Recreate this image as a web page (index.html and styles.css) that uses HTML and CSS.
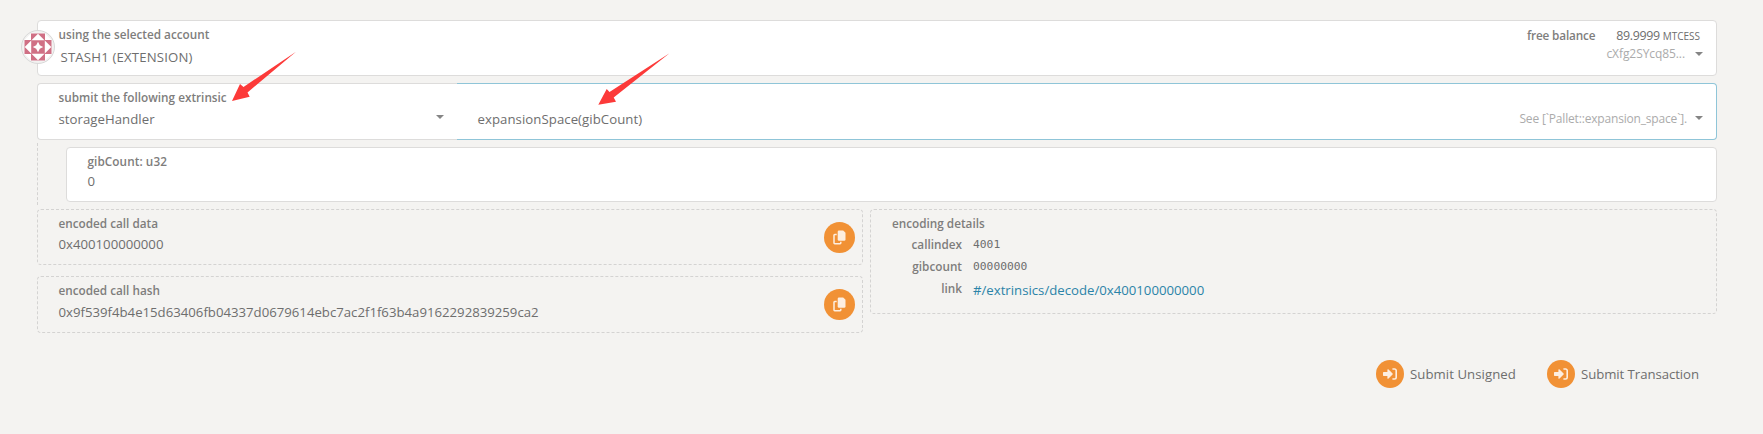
FILE: index.html
```html
<!DOCTYPE html>
<html lang="en">
<head>
<meta charset="utf-8">
<title>Extrinsics</title>
<link rel="stylesheet" href="styles.css">
</head>
<body>
<svg class="defs" width="0" height="0">
  <symbol id="copy" viewBox="0 0 13 15">
    <path d="M6 .5h4.200L12.500 2.800V9.500a1.300 1.300 0 0 1-1.300 1.300H6A1.300 1.300 0 0 1 4.700 9.500V1.800A1.300 1.300 0 0 1 6 .5z" fill="#fdeee0"/>
    <path d="M3.700 4.600H1.700a.7.7 0 0 0-.7.700v7.700c0 .4.300.7.700.7h5.400c.4 0 .7-.3.7-.7v-1.200" fill="none" stroke="#fdeee0" stroke-width="1.500"/>
  </symbol>
  <symbol id="signin" viewBox="0 0 14 12">
    <path d="M.6 4.100h3.800V1.700c0-.5.5-.7.9-.4l4.300 4.300c.2.2.2.6 0 .8l-4.300 4.300c-.4.3-.9.1-.9-.4V7.900H.6a.6.6 0 0 1-.6-.6V4.700c0-.3.3-.6.600-.6z" fill="#fdeee0"/>
    <path d="M9.400 1h2.200A1.600 1.600 0 0 1 13.200 2.600v6.800a1.600 1.600 0 0 1-1.600 1.600H9.400" fill="none" stroke="#fdeee0" stroke-width="1.600"/>
  </symbol>
</svg>
<main class="page">
  <section class="card account">
    <svg class="identicon" viewBox="0 0 34 34">
      <circle cx="17" cy="17" r="16.500" fill="#f3f2f1" stroke="#d8d8d8"/>
      <path d="M10 3.500L3.500 10v14l6.500 6.500h14l6.500-6.500V10L24 3.500z" fill="#fff"/>
      <path d="M10 3.500h14v27H10zM3.500 10h27v14h-27z" fill="#d07085"/>
      <path d="M17 3.700l6.500 6.500h-13zM17 30.300l6.500-6.500h-13zM3.700 17l6.500-6.500v13zM30.300 17l-6.500-6.500v13z" fill="#fff"/>
      <path d="M17 11.800l1.800 3.400 3.400 1.800-3.400 1.800-1.800 3.400-1.800-3.400-3.400-1.800 3.400-1.800z" fill="#fff"/>
    </svg>
    <div class="field">
      <div class="label">using the selected account</div>
      <div class="value v-stash">STASH1 (EXTENSION)</div>
    </div>
    <div class="balance">
      <div class="balance-row"><span class="label">free balance</span><span class="amount">89.9999</span><span class="unit">MTCESS</span></div>
      <div class="hint-row"><span class="hint h-addr">cXfg2SYcq85...</span><i class="caret"></i></div>
    </div>
  </section>

  <section class="extrinsic">
    <div class="module">
      <div>
        <div class="label">submit the following extrinsic</div>
        <div class="value v-module">storageHandler</div>
      </div>
      <i class="caret"></i>
    </div>
    <div class="method">
      <span class="value v-method">expansionSpace(gibCount)</span>
      <span class="hint h-see">See [`Pallet::expansion_space`].</span>
      <i class="caret"></i>
    </div>
  </section>

  <section class="params">
    <div class="card param">
      <div class="label l-gib">gibCount: u32</div>
      <div class="value">0</div>
    </div>
  </section>

  <section class="outputs">
    <div class="left">
      <div class="dashed data">
        <div><div class="label">encoded call data</div><div class="value v-data">0x400100000000</div></div>
        <button class="copy"><svg width="13" height="15"><use href="#copy"/></svg></button>
      </div>
      <div class="dashed hash">
        <div><div class="label">encoded call hash</div><div class="value v-hash">0x9f539f4b4e15d63406fb04337d0679614ebc7ac2f1f63b4a9162292839259ca2</div></div>
        <button class="copy"><svg width="13" height="15"><use href="#copy"/></svg></button>
      </div>
    </div>
    <div class="dashed details">
      <div class="label">encoding details</div>
      <div class="row"><span class="label key">callindex</span><code>4001</code></div>
      <div class="row"><span class="label key">gibcount</span><code>00000000</code></div>
      <div class="row"><span class="label key">link</span><a class="value v-link">#/extrinsics/decode/0x400100000000</a></div>
    </div>
  </section>

  <footer class="actions">
    <div class="action"><span class="round"><svg width="14" height="12"><use href="#signin"/></svg></span><span class="value v-unsigned">Submit Unsigned</span></div>
    <div class="action"><span class="round"><svg width="14" height="12"><use href="#signin"/></svg></span><span class="value v-trans">Submit Transaction</span></div>
  </footer>
</main>
<svg class="arrow arrow-a" width="66" height="51"><path d="M65 .8L16.500 41.500l2.200 4.200L1 50 9 33l3.500 3z" fill="#fc3a39"/></svg>
<svg class="arrow arrow-b" width="72" height="53"><path d="M71.500.2L15.700 44.500l2.300 4.200L.3 51.700 8.700 36l2.800 3z" fill="#fc3a39"/></svg>
</body>
</html>
```
FILE: styles.css
```css
* { box-sizing: border-box; }
body { margin: 0; background: #f4f3f1; color: #6e6e6e; font-family: "Open Sans", "Noto Sans", sans-serif; font-size: 13.2px; line-height: 20px; height: 434px; overflow: hidden; }
.defs { position: absolute; }
.page { width: 1680px; margin-left: 37px; padding-top: 20px; display: flex; flex-direction: column; }
.card { background: #fff; border: 1px solid #dddcdb; border-radius: 4px; }
.label { font-size: 11.75px; font-weight: 600; line-height: 16px; padding-bottom: 2px; color: #7e7d7c; white-space: nowrap; }
.value { white-space: nowrap; }
.hint { color: #ababab; font-size: 12px; white-space: nowrap; }
.caret { width: 0; height: 0; border: 4px solid transparent; border-top-color: #858585; border-bottom: 0; flex: none; }

.account { position: relative; height: 56px; padding: 5px 16px 0 20.5px; display: flex; justify-content: space-between; }
.identicon { position: absolute; left: -17px; top: 9px; width: 34px; height: 34px; }
.v-stash { padding: 3px 0 0 2px; letter-spacing: .17px; }
.balance { display: flex; flex-direction: column; }
.balance-row { display: flex; justify-content: flex-end; align-items: baseline; height: 19px; padding-top: 1px; }
.amount { margin-left: 21px; font-weight: 500; font-size: 12.400px; line-height: 18px; letter-spacing: -.35px; }
.unit { font-size: 10px; margin-left: 3px; font-weight: 500; line-height: 18px; }
.balance-row .label { letter-spacing: -.15px; }
.hint-row { display: flex; justify-content: flex-end; align-items: center; gap: 10px; height: 18px; margin-right: -3px; }
.h-addr { letter-spacing: -.08px; }

.extrinsic { display: flex; height: 57px; margin-top: 7px; }
.module { width: 420px; background: #fff; border: 1px solid #dddcdb; border-right: 0; border-radius: 4px 0 0 4px; padding: 5px 13px 0 20.5px; display: flex; justify-content: space-between; }
.module .caret { margin-top: 26px; }
.v-module { padding-top: 2px; letter-spacing: .04px; }
.method { flex: 1; background: #fff; border: 1px solid #8fc5d8; border-left: 0; border-radius: 0 4px 4px 0; padding: 15px 13px 0 20.5px; display: flex; align-items: center; }
.v-method { letter-spacing: .06px; }
.h-see { margin-left: auto; margin-right: 8px; letter-spacing: -.18px; }
.method .caret { margin-top: -2px; }

.params { height: 62px; margin-top: 3px; padding: 4px 0 0 28px; border-left: 1px dashed #d4d3d2; }
.param { height: 55px; padding: 5px 20px 0 20.500px; }
.l-gib { letter-spacing: .08px; }
.outputs { display: flex; gap: 7px; margin-top: 4px; align-items: flex-start; }
.left { width: 826px; display: flex; flex-direction: column; gap: 11px; }
.dashed { border: 1px dashed #d4d3d2; border-radius: 4px; }
.data, .hash { display: flex; justify-content: space-between; padding: 5px 7px 0 20.5px; }
.data { height: 56px; }
.hash { height: 57px; }
.data .value { padding-top: 1px; }
.hash .value { padding-top: 2px; }
.copy { width: 31px; height: 31px; border: 0; border-radius: 50%; background: #f19135; margin-top: 7px; padding: 0; display: grid; place-items: center; }
.details { flex: 1; height: 105px; padding: 5px 21px 0; }
.row { display: flex; height: 22px; padding-top: 2px; }
.key { width: 70px; text-align: right; margin-right: 11px; line-height: 18px; }
code { font: 11.300px/20px "DejaVu Sans Mono", monospace; }
.v-link { color: #2b83a8; line-height: 22px; }

.actions { display: flex; justify-content: flex-end; gap: 31px; padding-right: 18px; margin-top: 27px; }
.action { display: flex; align-items: center; gap: 6px; }
.v-unsigned { letter-spacing: .06px; }
.v-trans { letter-spacing: -.06px; }
.round { width: 28px; height: 28px; border-radius: 50%; background: #f19135; display: grid; place-items: center; }
.arrow { position: absolute; }
.arrow-a { left: 231px; top: 51px; }
.arrow-b { left: 598px; top: 53px; }
```
